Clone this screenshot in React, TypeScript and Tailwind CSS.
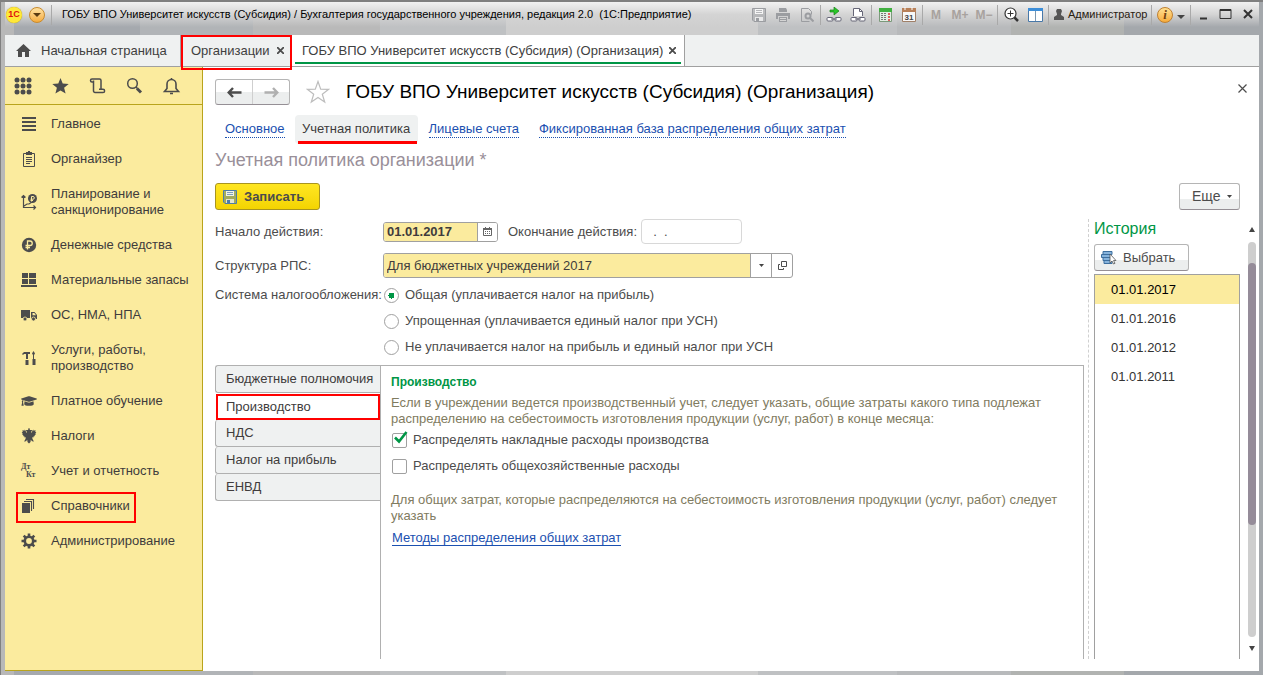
import React from "react";
import { FaGraduationCap, FaTruck } from "react-icons/fa";

const menuItems = [
  { label: "Главное", icon: "lines" },
  { label: "Органайзер", icon: "clipboard" },
  { label: "Планирование и санкционирование", icon: "plan" },
  { label: "Денежные средства", icon: "ruble" },
  { label: "Материальные запасы", icon: "boxes" },
  { label: "ОС, НМА, НПА", icon: "truck" },
  { label: "Услуги, работы, производство", icon: "tools" },
  { label: "Платное обучение", icon: "cap" },
  { label: "Налоги", icon: "eagle" },
  { label: "Учет и отчетность", icon: "dtkt" },
  { label: "Справочники", icon: "books", marked: true },
  { label: "Администрирование", icon: "gear" },
];

const historyDates = ["01.01.2017", "01.01.2016", "01.01.2012", "01.01.2011"];

const taxSystems = [
  "Общая (уплачивается налог на прибыль)",
  "Упрощенная (уплачивается единый налог при УСН)",
  "Не уплачивается налог на прибыль и единый налог при УСН",
];

const policyTabs = ["Бюджетные полномочия", "Производство", "НДС", "Налог на прибыль", "ЕНВД"];

function MenuIcon({ name }: { name: string }) {
  if (name === "truck") {
    return (
      <svg width="16" height="16" viewBox="0 0 16 16" fill="currentColor">
        <path d="M0 3h9v8H0zM10 5h3.500L16 8v4h-6z" />
        <path d="M11.500 6h1.800L15 8.200h-3.500z" fill="#fbeb9e" />
        <circle cx="4" cy="12" r="2" stroke="#fbeb9e" strokeWidth=".8" />
        <circle cx="12.500" cy="12" r="2" stroke="#fbeb9e" strokeWidth=".8" />
      </svg>
    );
  }
  if (name === "cap") return <FaGraduationCap size={16} />;
  if (name === "dtkt") {
    return (
      <span className="flex h-4 w-4 flex-col font-['Liberation_Serif',serif] text-[8px] leading-[8px] font-bold">
        <span>Дт</span>
        <span className="pl-[5px]">Кт</span>
      </span>
    );
  }
  return (
    <svg width="16" height="16" viewBox="0 0 16 16" fill="none" stroke="currentColor">
      {name === "lines" && <path d="M1 2h14M1 6h14M1 10h14M1 14h14" strokeWidth="2" />}
      {name === "clipboard" && (
        <>
          <path d="M2.500 2.500h11v13h-11zM5 6.500h6M5 8.500h6M5 10.500h6M5 12.500h4" />
          <path d="M5 1h2V0h2v1h2v3H5z" fill="currentColor" stroke="none" />
        </>
      )}
      {name === "plan" && (
        <>
          <path d="M2.500 1v12.500H15M.5 3.500l2-2 2 2M12.500 11.500l2 2-2 2M3 12l3-2h2l3-2" strokeWidth="1.200" />
          <circle cx="11.500" cy="4.500" r="4.500" fill="currentColor" stroke="none" />
          <path d="M10.500 7.500v-5h1.500a1.300 1.300 0 010 2.700H9.500M9.500 6.500h2.500" stroke="#fbeb9e" />
        </>
      )}
      {name === "ruble" && (
        <>
          <circle cx="8" cy="8" r="7.200" fill="currentColor" stroke="none" />
          <path d="M6.500 12.500V4h2.500a2.200 2.200 0 010 4.500H4.500M4.500 10.500H9" stroke="#fbeb9e" strokeWidth="1.300" />
        </>
      )}
      {name === "boxes" && (
        <path d="M1 1h6v5H1zM8 1h7v5H8zM1 7h6v5H1zM8 7h7v5H8zM0 13h16v2H0z" fill="currentColor" stroke="none" />
      )}
      {name === "tools" && (
        <path
          d="M1 4l2-2h6v2H7v5H5V4H3L2 5zM4.500 10h3v5h-3zM12.500 1l1.500 2.500-1 1.500v4h1.500v6h-3V9H12V5l-1-1.500z"
          fill="currentColor"
          stroke="none"
        />
      )}
      {name === "eagle" && (
        <path
          d="M7 .5h2L8.700 2h1.800l1 .8-.8.7-.7-.2v1.400l1.200-.8V2.200l1 .8.6-1.500.7 1.300 1-.8-.2 2 1 .2-1 1.500.7.5-1.500 1 .5.8-1.600.5.4.8-1.800.2L12 12l1 1.500-2-.3-1.200-1.500-.3 2.200L8 15.500l-1.500-1.600-.3-2.200L5 13.200l-2 .3L4 12l1-2.500-1.800-.2.400-.8L2 8l.5-.8-1.500-1 .7-.5-1-1.500 1-.2-.2-2 1 .8.7-1.300.6 1.500 1-.8v1.700L6 4.700V3.300l-.7.200-.8-.7 1-.8h1.800z"
          fill="currentColor"
          stroke="none"
        />
      )}
      {name === "books" && (
        <>
          <path d="M1 5h8v10H1z" fill="currentColor" stroke="none" />
          <path d="M3 3.500h7.500V13M5 1.500h7.500V11" strokeWidth="1.100" />
        </>
      )}
      {name === "gear" && (
        <>
          <circle cx="8" cy="8" r="4.200" strokeWidth="2.600" />
          <path d="M8 .5v3M8 12.500v3M.5 8h3M12.500 8h3M2.700 2.700l2 2M11.300 11.300l2 2M2.700 13.300l2-2M11.300 4.700l2-2" strokeWidth="2.600" />
        </>
      )}
    </svg>
  );
}

function TitleButton({ label, children }: { label: string; children: React.ReactNode }) {
  return (
    <button aria-label={label} className="flex h-5 w-6 shrink-0 items-center justify-center text-[12px] font-bold text-[#a8a29e]">
      {children}
    </button>
  );
}

function Divider() {
  return <span className="mx-px h-5 w-px shrink-0 bg-[#a9a9a9]" />;
}

function DiskIcon({ color }: { color: string }) {
  return (
    <svg width="14" height="14" viewBox="0 0 14 14" fill="none" stroke={color}>
      <path d="M.5.500h13v13H2l-1.500-1.500z" fill={color} fillOpacity=".5" />
      <path d="M3 1h8v5H3z" fill="#fff" fillOpacity=".85" stroke="none" />
      <path d="M4 2.500h6M4 4.500h6" strokeOpacity=".7" />
      <path d="M3 9h8v4H3z" fill="#fff" fillOpacity=".7" stroke="none" />
      <path d="M4 10h3v3H4z" fill={color} stroke="none" />
    </svg>
  );
}

function TitleBar() {
  return (
    <header className="flex h-[25px] items-center bg-linear-to-b from-[#f2f2f2] via-[#d4d4d4] to-[#d0d0d0]/0 pr-px pl-px text-[11px] text-black">
      <button aria-label="1С" className="flex h-4 w-4 shrink-0 items-center justify-center rounded-full bg-[#ffe838] text-[9px] font-bold text-[#e01010] shadow-[0_0_1px_#a08000]">
        1С
      </button>
      <button aria-label="Главное меню" className="ml-[7px] flex h-4 w-4 shrink-0 items-center justify-center rounded-full border border-[#c98a2c] bg-linear-to-b from-[#ffe2a0] to-[#f5ac3c]">
        <svg width="8" height="4" viewBox="0 0 8 4"><path d="M0 0h8L4 4z" fill="#5a3a10" /></svg>
      </button>
      <span className="ml-[6px] h-5 w-px bg-[#a9a9a9]" />
      <h1 className="ml-[10px] min-w-0 flex-1 truncate">
        ГОБУ ВПО Университет искусств (Субсидия) / Бухгалтерия государственного учреждения, редакция 2.0&nbsp; (1С:Предприятие)
      </h1>
      <TitleButton label="Сохранить"><DiskIcon color="#9b9da1" /></TitleButton>
      <TitleButton label="Печать">
        <svg width="14" height="14" viewBox="0 0 14 14" fill="#9b9da1"><path d="M3 0h7l1 2v2H3zM0 5h14v6h-2V8H2v3H0zM3 9h8v5H3z" /><path d="M4 10.500h6M4 12.500h6" stroke="#d4d4d4" /></svg>
      </TitleButton>
      <TitleButton label="Предварительный просмотр">
        <svg width="14" height="14" viewBox="0 0 14 14" fill="none" stroke="#9b9da1"><path d="M9.500 13.500h-8V.5h7l3 3v3" /><circle cx="8" cy="8" r="2.500" strokeWidth="2" /><path d="M10 10l3.500 3.500" strokeWidth="2" /></svg>
      </TitleButton>
      <Divider />
      <TitleButton label="Перейти по ссылке">
        <svg width="16" height="16" viewBox="0 0 16 16" fill="none" stroke="#667"><path d="M4 3h4V0l5 4-5 4V5H4z" fill="#28c828" stroke="#188018" strokeWidth=".7" /><rect x="1" y="10.500" width="6" height="3.500" rx="1" fill="#fff" /><rect x="9" y="10.500" width="6" height="3.500" rx="1" fill="#fff" /><path d="M5 12h6" /></svg>
      </TitleButton>
      <TitleButton label="Получить ссылку">
        <svg width="16" height="16" viewBox="0 0 16 16" fill="none" stroke="#667"><path d="M3.500 9V1.500h6l3 3V9" fill="#fff" /><path d="M9.500 1.500v3h3" /><rect x="1" y="10.500" width="6" height="3.500" rx="1" fill="#fff" /><rect x="9" y="10.500" width="6" height="3.500" rx="1" fill="#fff" /><path d="M5 12h6" /></svg>
      </TitleButton>
      <Divider />
      <TitleButton label="Калькулятор">
        <svg width="13" height="14" viewBox="0 0 13 14"><path d="M.5.500h12v13H.5z" fill="#e4eee4" stroke="#7b997b" /><path d="M0 0h13v4H0z" fill="#41b041" /><path d="M3 5v8M6 5v8" stroke="#777" strokeDasharray="1 1" strokeWidth="2" /><path d="M10 5v8" stroke="#d33" strokeDasharray="2 1" strokeWidth="1.500" /></svg>
      </TitleButton>
      <TitleButton label="Календарь">
        <svg width="14" height="15" viewBox="0 0 14 15"><path d="M.5 1.500h13v13H.5z" fill="#f8f8f8" stroke="#a08068" /><path d="M0 1h14v4H0z" fill="#b88058" /><path d="M3 0v3M10 0v3" stroke="#fff" /><text x="7" y="13" textAnchor="middle" fontSize="8" fontWeight="700" fill="#444" fontFamily="Liberation Sans">31</text></svg>
      </TitleButton>
      <Divider />
      <TitleButton label="M">M</TitleButton>
      <TitleButton label="M+">M+</TitleButton>
      <TitleButton label="M-">M−</TitleButton>
      <Divider />
      <TitleButton label="Масштаб">
        <svg width="15" height="15" viewBox="0 0 15 15" fill="none" stroke="#333"><circle cx="6.500" cy="6.500" r="5.500" fill="#fff" strokeWidth="1.200" /><path d="M3.500 6.500h6M6.500 3.500v6" /><path d="M10.500 10.500l3.500 3.500" strokeWidth="2.500" /></svg>
      </TitleButton>
      <TitleButton label="Панели">
        <svg width="15" height="14" viewBox="0 0 15 14"><path d="M.5.500h14v13H.5z" fill="#fff" stroke="#4878a8" /><path d="M0 0h15v3H0z" fill="#3d8ed8" /><path d="M7.500 3v10" stroke="#7c98b0" /></svg>
      </TitleButton>
      <Divider />
      <button className="flex h-5 w-[100px] shrink-0 items-center gap-1 pl-1 text-[#282010]">
        <svg width="10" height="11" viewBox="0 0 10 11" fill="#555" className="shrink-0"><path d="M3 0h4l1 2-1 3v1l3 2v3H0V8l3-2V5L2 2z" /></svg>
        Администратор
      </button>
      <Divider />
      <button aria-label="О программе" className="ml-1 flex h-4 w-4 shrink-0 items-center justify-center rounded-full border border-[#c08030] bg-linear-to-b from-[#ffe090] to-[#f6ab38] font-['Liberation_Serif',serif] text-[13px] font-bold text-[#704010] italic">
        i
      </button>
      <button aria-label="Еще команды" className="flex h-5 w-4 shrink-0 items-center justify-center pt-1">
        <svg width="8" height="4" viewBox="0 0 8 4"><path d="M0 0h8L4 4z" fill="#444" /></svg>
      </button>
      <Divider />
      <div className="flex shrink-0">
        {["M4 11.500h7", "M2 2.500h11v9H2zM2 3.500h11", "M4 3l8 8M12 3l-8 8"].map((d, i) => (
          <button key={d} aria-label={["Свернуть", "Развернуть", "Закрыть"][i]} className="flex h-5 w-[22px] items-center justify-center">
            <svg width="15" height="15" viewBox="0 0 15 15" fill="none" stroke="#333" strokeWidth={i === 1 ? 1 : 2}><path d={d} /></svg>
          </button>
        ))}
      </div>
    </header>
  );
}

function CloseMark() {
  return (
    <svg width="7" height="7" viewBox="0 0 7 7" stroke="#4c4c4c" strokeWidth="1.800"><path d="M0 0l7 7M7 0L0 7" /></svg>
  );
}

function WindowTabs() {
  return (
    <nav className="flex h-8 border-b border-[#a0a0a0] bg-[#eff1f1] text-[13px] text-[#404040]">
      <button className="flex w-[176px] items-center gap-[10px] border-r border-[#a0a0a0] pl-[11px]">
        <svg width="15" height="13" viewBox="0 0 15 13" fill="#4c4c4c"><path d="M7.500 0L15 7h-2v6H9V8H6v5H2V7H0z" /></svg>
        Начальная страница
      </button>
      <div className="relative z-10 flex w-[111px] items-center justify-between pr-2 pl-[10px]">
        <button>Организации</button>
        <button aria-label="Закрыть вкладку"><CloseMark /></button>
        <span className="pointer-events-none absolute inset-x-0 top-0 -bottom-1 border-2 border-[#f00]" />
      </div>
      <div className="relative flex w-[393px] items-center justify-between border-r border-[#a0a0a0] bg-white pr-2 pl-[10px]">
        <button className="whitespace-nowrap">ГОБУ ВПО Университет искусств (Субсидия) (Организация)</button>
        <button aria-label="Закрыть вкладку"><CloseMark /></button>
        <span className="absolute right-[3px] bottom-[2px] left-[3px] h-[2px] bg-[#009646]" />
      </div>
    </nav>
  );
}

function Sidebar() {
  return (
    <aside className="flex w-[198px] shrink-0 flex-col border-r border-b border-[#b9a41c] bg-[#fbeb9e] text-[#403c3c]">
      <div className="flex h-[38px] items-center gap-[18px] border-b border-[#b9a41c] pl-[9px] text-[#4c4c4c]">
        <button aria-label="Меню функций">
          <svg width="19" height="18" viewBox="0 0 19 18" fill="currentColor">
            {[3, 9, 15].map((y) => [3, 9, 15].map((x) => <circle key={`${x}-${y}`} cx={x} cy={y} r="2.500" />))}
          </svg>
        </button>
        <button aria-label="Избранное">
          <svg width="19" height="18" viewBox="0 0 19 18" fill="currentColor"><path d="M9.500 1l2.200 5.600 6 .4-4.600 3.800 1.500 5.800-5.100-3.200-5.100 3.200 1.500-5.800L1.300 7l6-.4z" /></svg>
        </button>
        <button aria-label="История">
          <svg width="19" height="18" viewBox="0 0 19 18" fill="none" stroke="currentColor" strokeWidth="1.500"><path d="M5.500 5H4a1.500 1.500 0 110-3h7.500a1.500 1.500 0 011.500 1.500V12M5.500 3.500V14a1.500 1.500 0 001.500 1.500h8a1.600 1.600 0 100-3.200h-4" /></svg>
        </button>
        <button aria-label="Поиск">
          <svg width="19" height="18" viewBox="0 0 19 18" fill="none" stroke="currentColor" strokeWidth="1.500"><circle cx="7.500" cy="6.500" r="4.800" /><path d="M11 10l1.500 1.500" /><path d="M12 11.500l4 4" strokeWidth="3" /></svg>
        </button>
        <button aria-label="Уведомления">
          <svg width="19" height="18" viewBox="0 0 19 18" fill="none" stroke="currentColor" strokeWidth="1.600"><path d="M9.500 1v1.500M5 11.500V7a4.500 4.500 0 019 0v4.500l2.500 3h-14zM8 16.500h3" /></svg>
        </button>
      </div>
      <ul>
        {menuItems.map((item) => (
          <li key={item.label}>
            <button className="relative flex w-full items-center gap-[14px] pt-[11px] pb-2 pl-4 text-left text-[13px] leading-4">
              <span className="w-4 shrink-0 text-[#4c4c4c]"><MenuIcon name={item.icon} /></span>
              <span className="max-w-[138px]">{item.label}</span>
              {item.marked && <span className="absolute top-[5px] left-[11px] h-[31px] w-[120px] border-2 border-[#f00]" />}
            </button>
          </li>
        ))}
      </ul>
    </aside>
  );
}

function PageHeader() {
  return (
    <div>
      <div className="flex items-center pr-3">
        <div className="flex h-[26px] w-[75px] divide-x divide-[#cfcfcf] rounded-[3px] border border-[#b5b5b5] border-b-[#958f95] bg-linear-to-b from-white from-50% to-[#eceeee] to-50%">
          <button aria-label="Назад" className="flex flex-1 items-center justify-center text-[#4c4c4c]">
            <svg width="15" height="11" viewBox="0 0 15 11" fill="none" stroke="currentColor" strokeWidth="2.400"><path d="M14.500 5.500H2M6 1L1.700 5.500 6 10" /></svg>
          </button>
          <button aria-label="Вперед" className="flex flex-1 items-center justify-center text-[#b0b0b0]">
            <svg width="15" height="11" viewBox="0 0 15 11" fill="none" stroke="currentColor" strokeWidth="2.400"><path d="M.5 5.500H13M9 1l4.300 4.500L9 10" /></svg>
          </button>
        </div>
        <button aria-label="Добавить в избранное" className="ml-4">
          <svg width="24" height="24" viewBox="0 0 24 24" fill="none" stroke="#bdbdbd" strokeWidth="1.200"><path d="M12 1.500l2.700 7.600 8 .2-6.400 4.900 2.400 7.900-6.700-4.700-6.700 4.700 2.400-7.900L1.300 9.300l8-.2z" /></svg>
        </button>
        <h2 className="ml-4 flex-1 truncate text-[19px] leading-6 text-black">ГОБУ ВПО Университет искусств (Субсидия) (Организация)</h2>
        <button aria-label="Закрыть" className="pb-2">
          <svg width="9" height="9" viewBox="0 0 9 9" stroke="#4c4c4c" strokeWidth="1.200"><path d="M.5.500l8 8M8.500.500l-8 8" /></svg>
        </button>
      </div>
      <nav className="mt-[10px] flex items-start text-[13px] leading-[16px] text-[#1b50b0]">
        <a href="#main" className="mt-[6px] ml-[10px] border-b border-dotted border-[#1b50b0]">Основное</a>
        <a href="#policy" className="relative ml-[10px] h-[29px] w-[123px] rounded-[4px] bg-[#eff1f1] pt-[6px] text-center text-[#403c3c]">
          Учетная политика
          <span className="absolute right-px bottom-0 left-[3px] h-[3px] bg-[#f00]" />
        </a>
        <a href="#accounts" className="mt-[6px] ml-[11px] border-b border-dotted border-[#1b50b0]">Лицевые счета</a>
        <a href="#base" className="mt-[6px] ml-5 border-b border-dotted border-[#1b50b0]">Фиксированная база распределения общих затрат</a>
      </nav>
      <h3 className="mt-1 text-[18px] leading-6 text-[#998f99]">Учетная политика организации *</h3>
    </div>
  );
}

function PolicyForm() {
  return (
    <div className="grid grid-cols-[168px_1fr] text-[13px] leading-4 text-[#4c4c4c]">
      <label htmlFor="start" className="flex h-[25px] items-center">Начало действия:</label>
      <div className="flex items-center">
        <div className="flex h-5 w-[115px] overflow-hidden rounded-[3px] border border-[#a0a0a0]">
          <input id="start" defaultValue="01.01.2017" className="w-[93px] bg-[#fbeb9e] pl-[3px] font-bold text-[#403c3c] outline-none" />
          <button aria-label="Выбрать дату" className="flex flex-1 items-center justify-center border-l border-[#a0a0a0] bg-white">
            <svg width="9" height="9" viewBox="0 0 9 9" fill="none" stroke="#666"><path d="M.5 1.500h8v7h-8z" /><path d="M0 2h9" strokeWidth="2" /><path d="M2.500 0v1M6.500 0v1" /><path d="M2 4.500h6M2 6.500h6" strokeDasharray="1 1" /></svg>
          </button>
        </div>
        <label htmlFor="end" className="ml-[10px]">Окончание действия:</label>
        <input id="end" defaultValue="  .  ." className="ml-1 h-[25px] w-[101px] rounded-[4px] border border-[#d8d8d8] bg-white pl-1 whitespace-pre outline-none" />
      </div>
      <label htmlFor="structure" className="mt-[9px] flex h-[25px] items-center">Структура РПС:</label>
      <div className="mt-[9px] flex h-[25px] w-[410px] overflow-hidden rounded-[3px] border border-[#a0a0a0]">
        <input id="structure" defaultValue="Для бюджетных учреждений 2017" className="min-w-0 flex-1 bg-[#fbeb9e] pl-[3px] text-[#403c3c] outline-none" />
        <button aria-label="Открыть список" className="flex w-[21px] items-center justify-center border-l border-[#a0a0a0]">
          <svg width="5" height="3" viewBox="0 0 5 3"><path d="M0 0h5L2.500 3z" fill="#444" /></svg>
        </button>
        <button aria-label="Открыть" className="flex w-[21px] items-center justify-center border-l border-[#a0a0a0]">
          <svg width="9" height="9" viewBox="0 0 9 9" fill="none" stroke="#4c4c4c"><path d="M3.500.500h5v5h-5zM2 3.500H.5v5h5V7" /></svg>
        </button>
      </div>
      <span className="mt-[9px] whitespace-nowrap">Система налогообложения:</span>
      <div className="mt-[9px] flex flex-col gap-[10px] pl-px">
        {taxSystems.map((name, i) => (
          <label key={name} className="flex items-center gap-[6px]">
            <input type="radio" name="tax" defaultChecked={i === 0} className="h-[15px] w-[15px] appearance-none rounded-full border border-[#a0a0a0] bg-white checked:bg-[radial-gradient(circle,#009646_3px,#fff_3px)]" />
            {name}
          </label>
        ))}
      </div>
    </div>
  );
}

function PolicySection() {
  return (
    <div className="mt-[10px] mr-1 flex min-h-0 flex-1 text-[13px] leading-4">
      <div className="z-10 w-[165px] shrink-0">
        {policyTabs.map((tab, i) => (
          <button
            key={tab}
            className={
              i === 1
                ? "relative block h-[27px] w-full bg-white pl-[11px] text-left text-[#403c3c]"
                : "block h-[27px] w-full rounded-l-[3px] border-b border-l border-[#b0b0b0] bg-[#eff1f1] pl-[10px] text-left text-[#403c3c] first:h-7 first:border-t"
            }
          >
            {tab}
            {i === 1 && <span className="absolute top-px right-0 bottom-0 left-px border-2 border-[#f00]" />}
          </button>
        ))}
      </div>
      <section className="min-w-0 flex-1 border border-b-0 border-[#b0b0b0] pt-2 pr-4 pl-[10px] text-[#7f7b60]">
        <h4 className="text-[12px] font-bold text-[#009646]">Производство</h4>
        <p className="mt-[5px]">
          Если в учреждении ведется производственный учет, следует указать, общие затраты какого типа подлежат распределению на себестоимость изготовления продукции (услуг, работ) в конце месяца:
        </p>
        <div className="mt-[5px] flex flex-col gap-[10px] text-[#4c4c4c]">
          {["Распределять накладные расходы производства", "Распределять общехозяйственные расходы"].map((name, i) => (
            <label key={name} className="relative flex items-center gap-[6px]">
              <input type="checkbox" defaultChecked={i === 0} className="peer ml-px h-[15px] w-[15px] appearance-none rounded-[2px] border border-[#a0a0a0] bg-white" />
              <svg width="14" height="13" viewBox="0 0 14 13" className="absolute -top-px left-[3px] hidden peer-checked:block" fill="none" stroke="#009646" strokeWidth="2.600"><path d="M1 6.500l4 4L12.500 1" /></svg>
              {name}
            </label>
          ))}
        </div>
        <p className="mt-[18px]">
          Для общих затрат, которые распределяются на себестоимость изготовления продукции (услуг, работ) следует указать
        </p>
        <a href="#methods" className="mt-[6px] ml-px inline-block border-b border-[#1b50b0] leading-[15px] text-[#1b50b0]">Методы распределения общих затрат</a>
      </section>
    </div>
  );
}

function HistoryPane() {
  return (
    <div className="flex w-[152px] shrink-0 flex-col border-l border-dashed border-[#d0d0d0] pl-[5px]">
      <h3 className="h-[25px] text-[16px] leading-5 text-[#009646]">История</h3>
      <button className="flex h-[27px] w-[95px] items-center gap-[6px] rounded-[3px] border border-[#b5b5b5] border-b-[#958f95] bg-linear-to-b from-white from-60% to-[#eceeee] to-60% pl-[6px] text-[13px] text-[#4c4c4c]">
        <svg width="16" height="14" viewBox="0 0 16 14"><path d="M2 .5h9v3H2zM.5 3.500h9v3h-9zM2 6.500h9v3H2zM3 9.500h8v3H3z" fill="#86b3dc" stroke="#3d6f9f" /><path d="M9 3v9l2-2 1.500 3 1.500-.7-1.500-2.800H15z" fill="#fff" stroke="#555" strokeWidth=".8" /></svg>
        Выбрать
      </button>
      <ul className="mt-[3px] flex-1 border border-b-0 border-[#a0a0a0] text-[13px] leading-[29px] text-[#333]">
        {historyDates.map((date) => (
          <li key={date} className="pl-4 first:bg-[#fbeb9e] first:text-black">{date}</li>
        ))}
      </ul>
    </div>
  );
}

function Scrollbar() {
  return (
    <div className="ml-2 flex w-2 shrink-0 flex-col items-center pt-2">
      <svg width="6" height="5" viewBox="0 0 6 5"><path d="M3 0l3 5H0z" fill="#444" /></svg>
      <div className="mt-[10px] mb-[9px] w-2 flex-1 rounded-full bg-[#cecece] pt-[21px]">
        <div className="h-[70%] rounded-full bg-[#958c99]" />
      </div>
      <svg width="6" height="5" viewBox="0 0 6 5" className="mb-2"><path d="M3 5l3-5H0z" fill="#444" /></svg>
    </div>
  );
}

export default function App() {
  return (
    <div className="flex h-screen min-h-[600px] flex-col overflow-hidden border-t-2 border-l border-[#808080] bg-[linear-gradient(90deg,#b8b8b8_1%,#a5a9ae_1%,#a5a9ae_11%,#b1b4b7_11%,#b1b4b7_20%,#b9b9b9_20%,#b9b9b9_30%,#bfc1c3_30%,#bfc1c3_40%,#cecece_40%,#cecece_60%,#bfc1c3_60%,#bfc1c3_71%,#b8babc_71%,#b8babc_80%,#b1b3b1_80%,#b1b3b1_89%,#a4a8ac_89%)] pr-1 pb-1 pl-1 font-['Liberation_Sans',Arial,sans-serif]">
      <TitleBar />
      <div className="mt-2 flex min-h-0 flex-1 flex-col bg-white">
        <WindowTabs />
        <div className="flex min-h-0 flex-1">
          <Sidebar />
          <main className="flex min-w-0 flex-1 flex-col pt-3 pl-3 pb-3">
            <PageHeader />
            <div className="mt-[11px] flex items-start justify-between pr-[19px]">
              <button className="flex h-[27px] w-[105px] items-center gap-[7px] rounded-[3px] border border-[#a89420] bg-linear-to-b from-[#ffe620] to-[#f4d400] pl-[7px] text-[13px] font-bold text-[#4c4c4c]">
                <DiskIcon color="#4d7ca8" />
                Записать
              </button>
              <button className="flex h-[27px] w-[61px] items-center gap-[6px] rounded-[3px] border border-[#b5b5b5] border-b-[#958f95] bg-linear-to-b from-white from-60% to-[#eceeee] to-60% pl-3 text-[14px] text-[#4c4c4c]">
                Еще
                <svg width="5" height="3" viewBox="0 0 5 3"><path d="M0 0h5L2.500 3z" fill="#444" /></svg>
              </button>
            </div>
            <div className="mt-[9px] flex min-h-0 flex-1 pr-[3px]">
              <div className="flex min-w-0 flex-1 flex-col">
                <PolicyForm />
                <PolicySection />
              </div>
              <HistoryPane />
              <Scrollbar />
            </div>
          </main>
        </div>
      </div>
    </div>
  );
}
